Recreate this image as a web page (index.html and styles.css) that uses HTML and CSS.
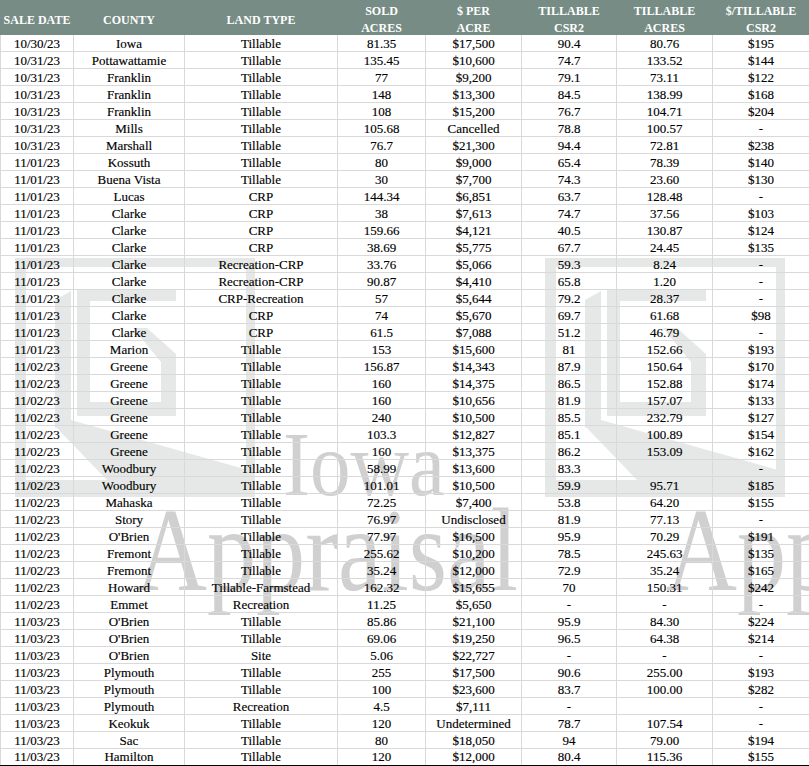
FILE: index.html
```html
<!DOCTYPE html>
<html>
<head>
<meta charset="utf-8">
<title>Land Sales</title>
<link rel="stylesheet" href="styles.css">
</head>
<body>
<div class="sheet">
  <svg class="watermark" width="809" height="766" viewBox="0 0 809 766" aria-hidden="true">
    <defs>
      <g id="logo">
        <rect x="0" y="0" width="240" height="9"/>
        <rect x="0" y="0" width="11" height="239"/>
        <rect x="231" y="0" width="9" height="239"/>
        <rect x="0" y="222" width="240" height="17"/>
        <polygon points="40,42 56,33 56,164 40,170"/>
        <rect x="62" y="32" width="13" height="126"/>
        <rect x="62" y="32" width="99" height="11"/>
        <rect x="62" y="144" width="99" height="14"/>
        <rect x="146" y="104" width="15" height="54"/>
        <polygon points="118,70 132,70 161,96 161,108 146,104"/>
        <polygon points="40,168 56,162 240,214 240,222 92,222"/>
      </g>
    </defs>
    <g class="logo-fill">
      <use href="#logo" transform="translate(15,258)"/>
      <use href="#logo" transform="translate(545,258)"/>
    </g>
    <g class="wm-text">
      <text x="283" y="495" font-size="92" textLength="162" lengthAdjust="spacingAndGlyphs">Iowa</text>
      <text x="136" y="590" font-size="118" textLength="382" lengthAdjust="spacingAndGlyphs">Appraisal</text>
      <text x="666" y="590" font-size="118" textLength="382" lengthAdjust="spacingAndGlyphs">Appraisal</text>
    </g>
  </svg>
  <table class="grid">
    <colgroup>
      <col class="c-date"><col class="c-county"><col class="c-type"><col class="c-sold">
      <col class="c-per"><col class="c-csr"><col class="c-tacres"><col class="c-tcsr">
    </colgroup>
    <thead>
      <tr>
        <th><span class="hd">SALE DATE</span></th>
        <th><span class="hd">COUNTY</span></th>
        <th><span class="hd">LAND TYPE</span></th>
        <th><span class="hd">SOLD<br>ACRES</span></th>
        <th><span class="hd">$ PER<br>ACRE</span></th>
        <th><span class="hd">TILLABLE<br>CSR2</span></th>
        <th><span class="hd">TILLABLE<br>ACRES</span></th>
        <th><span class="hd">$/TILLABLE<br>CSR2</span></th>
      </tr>
    </thead>
    <tbody>
      <tr><td>10/30/23</td><td>Iowa</td><td>Tillable</td><td>81.35</td><td>$17,500</td><td>90.4</td><td>80.76</td><td>$195</td></tr>
      <tr><td>10/31/23</td><td>Pottawattamie</td><td>Tillable</td><td>135.45</td><td>$10,600</td><td>74.7</td><td>133.52</td><td>$144</td></tr>
      <tr><td>10/31/23</td><td>Franklin</td><td>Tillable</td><td>77</td><td>$9,200</td><td>79.1</td><td>73.11</td><td>$122</td></tr>
      <tr><td>10/31/23</td><td>Franklin</td><td>Tillable</td><td>148</td><td>$13,300</td><td>84.5</td><td>138.99</td><td>$168</td></tr>
      <tr><td>10/31/23</td><td>Franklin</td><td>Tillable</td><td>108</td><td>$15,200</td><td>76.7</td><td>104.71</td><td>$204</td></tr>
      <tr><td>10/31/23</td><td>Mills</td><td>Tillable</td><td>105.68</td><td>Cancelled</td><td>78.8</td><td>100.57</td><td>-</td></tr>
      <tr><td>10/31/23</td><td>Marshall</td><td>Tillable</td><td>76.7</td><td>$21,300</td><td>94.4</td><td>72.81</td><td>$238</td></tr>
      <tr><td>11/01/23</td><td>Kossuth</td><td>Tillable</td><td>80</td><td>$9,000</td><td>65.4</td><td>78.39</td><td>$140</td></tr>
      <tr><td>11/01/23</td><td>Buena Vista</td><td>Tillable</td><td>30</td><td>$7,700</td><td>74.3</td><td>23.60</td><td>$130</td></tr>
      <tr><td>11/01/23</td><td>Lucas</td><td>CRP</td><td>144.34</td><td>$6,851</td><td>63.7</td><td>128.48</td><td>-</td></tr>
      <tr><td>11/01/23</td><td>Clarke</td><td>CRP</td><td>38</td><td>$7,613</td><td>74.7</td><td>37.56</td><td>$103</td></tr>
      <tr><td>11/01/23</td><td>Clarke</td><td>CRP</td><td>159.66</td><td>$4,121</td><td>40.5</td><td>130.87</td><td>$124</td></tr>
      <tr><td>11/01/23</td><td>Clarke</td><td>CRP</td><td>38.69</td><td>$5,775</td><td>67.7</td><td>24.45</td><td>$135</td></tr>
      <tr><td>11/01/23</td><td>Clarke</td><td>Recreation-CRP</td><td>33.76</td><td>$5,066</td><td>59.3</td><td>8.24</td><td>-</td></tr>
      <tr><td>11/01/23</td><td>Clarke</td><td>Recreation-CRP</td><td>90.87</td><td>$4,410</td><td>65.8</td><td>1.20</td><td>-</td></tr>
      <tr><td>11/01/23</td><td>Clarke</td><td>CRP-Recreation</td><td>57</td><td>$5,644</td><td>79.2</td><td>28.37</td><td>-</td></tr>
      <tr><td>11/01/23</td><td>Clarke</td><td>CRP</td><td>74</td><td>$5,670</td><td>69.7</td><td>61.68</td><td>$98</td></tr>
      <tr><td>11/01/23</td><td>Clarke</td><td>CRP</td><td>61.5</td><td>$7,088</td><td>51.2</td><td>46.79</td><td>-</td></tr>
      <tr><td>11/01/23</td><td>Marion</td><td>Tillable</td><td>153</td><td>$15,600</td><td>81</td><td>152.66</td><td>$193</td></tr>
      <tr><td>11/02/23</td><td>Greene</td><td>Tillable</td><td>156.87</td><td>$14,343</td><td>87.9</td><td>150.64</td><td>$170</td></tr>
      <tr><td>11/02/23</td><td>Greene</td><td>Tillable</td><td>160</td><td>$14,375</td><td>86.5</td><td>152.88</td><td>$174</td></tr>
      <tr><td>11/02/23</td><td>Greene</td><td>Tillable</td><td>160</td><td>$10,656</td><td>81.9</td><td>157.07</td><td>$133</td></tr>
      <tr><td>11/02/23</td><td>Greene</td><td>Tillable</td><td>240</td><td>$10,500</td><td>85.5</td><td>232.79</td><td>$127</td></tr>
      <tr><td>11/02/23</td><td>Greene</td><td>Tillable</td><td>103.3</td><td>$12,827</td><td>85.1</td><td>100.89</td><td>$154</td></tr>
      <tr><td>11/02/23</td><td>Greene</td><td>Tillable</td><td>160</td><td>$13,375</td><td>86.2</td><td>153.09</td><td>$162</td></tr>
      <tr><td>11/02/23</td><td>Woodbury</td><td>Tillable</td><td>58.99</td><td>$13,600</td><td>83.3</td><td></td><td>-</td></tr>
      <tr><td>11/02/23</td><td>Woodbury</td><td>Tillable</td><td>101.01</td><td>$10,500</td><td>59.9</td><td>95.71</td><td>$185</td></tr>
      <tr><td>11/02/23</td><td>Mahaska</td><td>Tillable</td><td>72.25</td><td>$7,400</td><td>53.8</td><td>64.20</td><td>$155</td></tr>
      <tr><td>11/02/23</td><td>Story</td><td>Tillable</td><td>76.97</td><td>Undisclosed</td><td>81.9</td><td>77.13</td><td>-</td></tr>
      <tr><td>11/02/23</td><td>O'Brien</td><td>Tillable</td><td>77.97</td><td>$16,500</td><td>95.9</td><td>70.29</td><td>$191</td></tr>
      <tr><td>11/02/23</td><td>Fremont</td><td>Tillable</td><td>255.62</td><td>$10,200</td><td>78.5</td><td>245.63</td><td>$135</td></tr>
      <tr><td>11/02/23</td><td>Fremont</td><td>Tillable</td><td>35.24</td><td>$12,000</td><td>72.9</td><td>35.24</td><td>$165</td></tr>
      <tr><td>11/02/23</td><td>Howard</td><td>Tillable-Farmstead</td><td>162.32</td><td>$15,655</td><td>70</td><td>150.31</td><td>$242</td></tr>
      <tr><td>11/02/23</td><td>Emmet</td><td>Recreation</td><td>11.25</td><td>$5,650</td><td>-</td><td>-</td><td>-</td></tr>
      <tr><td>11/03/23</td><td>O'Brien</td><td>Tillable</td><td>85.86</td><td>$21,100</td><td>95.9</td><td>84.30</td><td>$224</td></tr>
      <tr><td>11/03/23</td><td>O'Brien</td><td>Tillable</td><td>69.06</td><td>$19,250</td><td>96.5</td><td>64.38</td><td>$214</td></tr>
      <tr><td>11/03/23</td><td>O'Brien</td><td>Site</td><td>5.06</td><td>$22,727</td><td>-</td><td>-</td><td>-</td></tr>
      <tr><td>11/03/23</td><td>Plymouth</td><td>Tillable</td><td>255</td><td>$17,500</td><td>90.6</td><td>255.00</td><td>$193</td></tr>
      <tr><td>11/03/23</td><td>Plymouth</td><td>Tillable</td><td>100</td><td>$23,600</td><td>83.7</td><td>100.00</td><td>$282</td></tr>
      <tr><td>11/03/23</td><td>Plymouth</td><td>Recreation</td><td>4.5</td><td>$7,111</td><td>-</td><td></td><td>-</td></tr>
      <tr><td>11/03/23</td><td>Keokuk</td><td>Tillable</td><td>120</td><td>Undetermined</td><td>78.7</td><td>107.54</td><td>-</td></tr>
      <tr><td>11/03/23</td><td>Sac</td><td>Tillable</td><td>80</td><td>$18,050</td><td>94</td><td>79.00</td><td>$194</td></tr>
      <tr class="last"><td>11/03/23</td><td>Hamilton</td><td>Tillable</td><td>120</td><td>$12,000</td><td>80.4</td><td>115.36</td><td>$155</td></tr>
    </tbody>
  </table>
</div>
</body>
</html>
```
FILE: styles.css
```css
html, body {
  margin: 0;
  padding: 0;
  background: #ffffff;
}

body {
  font-family: "Liberation Serif", "Times New Roman", Times, serif;
  color: #000;
}

.sheet {
  position: relative;
  width: 809px;
  height: 766px;
  overflow: hidden;
}

.watermark {
  position: absolute;
  left: 0;
  top: 0;
  z-index: 0;
  pointer-events: none;
}

.logo-fill {
  fill: #e5e8e6;
}

.wm-text {
  fill: #d0d0d0;
  font-family: "Liberation Serif", "Times New Roman", Times, serif;
}

.grid {
  position: relative;
  z-index: 1;
  width: 809px;
  table-layout: fixed;
  border-collapse: collapse;
  border-spacing: 0;
  font-family: "Liberation Serif", "Times New Roman", Times, serif;
}

.c-date { width: 73px; }
.c-county { width: 111px; }
.c-type { width: 153px; }
.c-sold { width: 88px; }
.c-per { width: 96px; }
.c-csr { width: 95px; }
.c-tacres { width: 96px; }
.c-tcsr { width: 97px; }

.grid thead tr {
  height: 33px;
}

.grid th {
  background: #768c84;
  color: #ffffff;
  font-family: "Liberation Serif", "Times New Roman", Times, serif;
  font-weight: bold;
  font-size: 12px;
  line-height: 17px;
  padding: 0;
  text-align: center;
  vertical-align: middle;
  border: 1px solid #768c84;
  border-top: none;
}

.hd {
  display: block;
  margin-top: 3px;
  margin-bottom: -3px;
}

.grid tbody tr {
  height: 17px;
}

.grid td {
  padding: 0;
  font-family: "Liberation Serif", "Times New Roman", Times, serif;
  font-size: 13px;
  line-height: 15px;
  text-align: center;
  vertical-align: middle;
  white-space: nowrap;
  border: 1px solid #d9d9d9;
  color: #000;
  -webkit-text-stroke: 0.15px #000;
}

.grid tr.last td {
  border-bottom: 2px solid #000000;
}
```
